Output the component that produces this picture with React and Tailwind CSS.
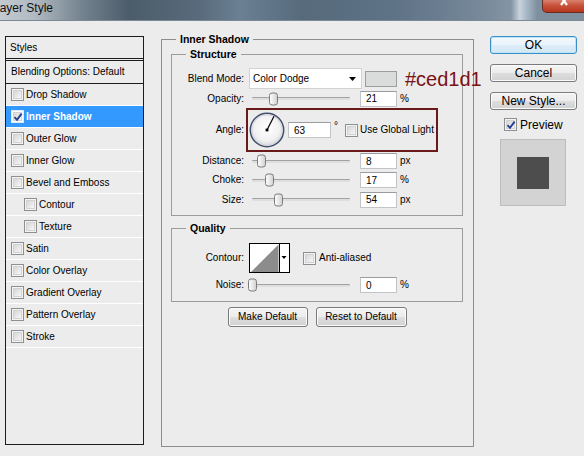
import React from "react";

/* ── Small pieces ── */
const CheckBox = ({ checked, light }) => (
  <span
    className={
      "relative inline-flex w-[13px] h-[13px] shrink-0 items-center justify-center border " +
      (light ? "border-[#dfe8f5] bg-white" : "border-[#8e8f8f] bg-[#f4f4f4]")
    }
  >
    <span className="w-[9px] h-[9px] border border-[#d2d2d2] bg-[linear-gradient(135deg,#d6d6d6_0%,#f7f7f7_100%)]" />
    {checked && (
      <svg className="absolute left-[1px] top-[1px]" width="10" height="10" viewBox="0 0 10 10">
        <path d="M1.5 5.2 L4 7.8 L8.6 1.6" fill="none" stroke="#23408e" strokeWidth="1.9" />
      </svg>
    )}
  </span>
);

const Btn = ({ children, primary, className = "" }) => (
  <div
    className={
      "flex items-center justify-center rounded-[3px] border leading-none " +
      (primary
        ? "border-[#3c8fc4] shadow-[inset_0_0_0_1px_#b9e4fb] bg-[linear-gradient(180deg,#f3f9fd_0%,#eaf4fa_50%,#dcedf7_51%,#d2e7f4_100%)] "
        : "border-[#7a7a7a] shadow-[inset_0_0_0_1px_#fbfbfb] bg-[linear-gradient(180deg,#f4f4f4_0%,#ececec_50%,#dedede_51%,#d2d2d2_100%)] ") +
      className
    }
  >
    {children}
  </div>
);

const Field = ({ value, w = "w-[37px]" }) => (
  <div className={"h-[16px] border border-[#c2c4c8] border-t-[#999b9f] bg-white pl-[5px] flex items-center text-[10px] " + w}>
    {value}
  </div>
);

const Slider = ({ thumb }) => (
  <div className="relative w-[104px] h-full flex items-center shrink-0">
    <div className="ml-[3px] w-[98px] h-[3px] rounded-[1px] border-t border-[#a2a2a2] bg-[#dedede]" />
    <div
      className="absolute top-1/2 -translate-y-1/2 w-[9px] h-[13px] rounded-[3px] border border-[#7c7c7c] bg-[linear-gradient(90deg,#fbfbfb_0%,#e9e9e9_50%,#d2d2d2_100%)]"
      style={{ left: thumb }}
    />
  </div>
);

const Label = ({ children }) => (
  <div className="w-[72px] shrink-0 text-right text-[10px] leading-none">{children}</div>
);

const SliderRow = ({ label, thumb, value, unit, h }) => (
  <div className={"flex items-center " + h}>
    <Label>{label}</Label>
    <div className="ml-[5px] flex items-center h-full">
      <Slider thumb={thumb} />
      <div className="ml-[7px]">
        <Field value={value} />
      </div>
      <span className="ml-[3px] text-[10px] leading-none">{unit}</span>
    </div>
  </div>
);

const Dial = () => (
  <svg width="36" height="36" viewBox="0 0 36 36" className="shrink-0">
    <defs>
      <radialGradient id="dialFill" cx="50%" cy="45%" r="55%">
        <stop offset="0%" stopColor="#ffffff" />
        <stop offset="70%" stopColor="#f1f1f1" />
        <stop offset="100%" stopColor="#cfd3db" />
      </radialGradient>
    </defs>
    <circle cx="18" cy="18" r="16.7" fill="url(#dialFill)" stroke="#44506b" strokeWidth="1.5" />
    <circle cx="18" cy="18" r="15.2" fill="none" stroke="#d3d7df" strokeWidth="1" />
    <line x1="18" y1="18" x2="25" y2="4.2" stroke="#000" strokeWidth="1.2" />
    <rect x="16.6" y="16.6" width="2.8" height="2.8" fill="#000" />
  </svg>
);

const ContourPicker = () => (
  <svg width="41" height="30" viewBox="0 0 41 30" className="shrink-0">
    <rect x="0.5" y="0.5" width="40" height="29" fill="#fff" stroke="#000" />
    <polygon points="2,29 29.5,1.5 29.5,29" fill="#8c8c8c" />
    <line x1="30.5" y1="0.5" x2="30.5" y2="29.5" stroke="#000" />
    <polygon points="32.5,13 37.5,13 35,16" fill="#000" />
  </svg>
);

const styleRows = [
  { name: "Drop Shadow" },
  { name: "Inner Shadow", on: true },
  { name: "Outer Glow" },
  { name: "Inner Glow" },
  { name: "Bevel and Emboss" },
  { name: "Contour", sub: true },
  { name: "Texture", sub: true },
  { name: "Satin" },
  { name: "Color Overlay" },
  { name: "Gradient Overlay" },
  { name: "Pattern Overlay" },
  { name: "Stroke" },
];

/* ── Main Component ── */
export default function App() {
  return (
    <div className="w-[584px] h-[456px] overflow-hidden bg-[#ececec] text-black font-['Liberation_Sans',Arial,sans-serif] flex flex-col">
      {/* title bar */}
      <div className="h-[21px] shrink-0 flex items-start border-b border-[#7d8a96] bg-[linear-gradient(90deg,#c3cad0_0%,#b0b9c1_6%,#74838f_14%,#4c5c6a_22%,#586a7b_34%,#6a8093_41%,#566a7c_52%,#5f7387_68%,#76889a_82%,#8494a3_87.5%,#c8d3dd_89%,#9fb0bf_90.5%,#7e8f9f_92%)]">
        <span className="ml-[-7px] mt-[1px] text-[12px] leading-[14px] text-[#111] whitespace-nowrap">Layer Style</span>
        <div className="ml-auto mr-[-3px] w-[45px] h-[13px] rounded-bl-[5px] border border-t-0 border-[#6b2a1e] bg-[linear-gradient(180deg,#d9826f_0%,#c9523b_45%,#b8361f_100%)] flex justify-center">
          <svg width="12" height="6" viewBox="0 0 12 6">
            <path d="M2 -3 L8 5 M8 -3 L2 5" stroke="#fff" strokeWidth="2.2" />
          </svg>
        </div>
      </div>

      <div className="flex items-start">
        {/* styles list */}
        <div className="ml-[5px] mt-[15px] w-[139px] h-[409px] shrink-0 border border-[#1c1c1c] text-[10px] leading-none flex flex-col">
          <div className="h-[24px] shrink-0 pl-[4px] flex items-center border-b-[3px] border-double border-[#1c1c1c]">Styles</div>
          <div className="h-[23px] shrink-0 pl-[5px] flex items-center border-b border-[#1c1c1c]">Blending Options: Default</div>
          {styleRows.map((r) => (
            <div
              key={r.name}
              className={
                "h-[22px] shrink-0 flex items-center border-b border-white " +
                (r.sub ? "pl-[18px] " : "pl-[5px] ") +
                (r.on ? "bg-[#3399ff] text-white font-bold" : "")
              }
            >
              <CheckBox checked={r.on} light={r.on} />
              <span className="ml-[2px]">{r.name}</span>
            </div>
          ))}
        </div>

        {/* main panel */}
        <fieldset className="ml-[17px] mt-[12px] w-[313px] min-w-0 h-[414px] shrink-0 border border-[#8d8d8d]">
          <legend className="ml-[14px] px-[4px] text-[10.5px] leading-[13px] font-bold">Inner Shadow</legend>
          <div className="pl-[9px] pr-[10px] flex flex-col">
            <fieldset className="mt-[2px] w-[292px] min-w-0 border border-[#9c9c9c]">
              <legend className="ml-[14px] px-[4px] text-[10.5px] leading-[13px] font-bold">Structure</legend>
              <div className="pt-[7px] pb-[6px] flex flex-col">
                <div className="h-[21px] w-[290px] flex items-center">
                  <Label>Blend Mode:</Label>
                  <div className="ml-[5px] w-[113px] h-[21px] shrink-0 border border-[#d2d2d2] bg-white flex items-center pl-[3px] text-[10px]">
                    Color Dodge
                    <svg className="ml-auto mr-[5px]" width="7" height="4" viewBox="0 0 7 4">
                      <polygon points="0,0 7,0 3.5,4" fill="#000" />
                    </svg>
                  </div>
                  <div className="ml-[3px] w-[32px] h-[16px] shrink-0 border border-[#9d9d9d] bg-[#dadcdc]" />
                  <span className="ml-[8px] w-0 overflow-visible whitespace-nowrap text-[20px] leading-none text-[#7a1214]">#ced1d1</span>
                </div>
                <SliderRow label="Opacity:" thumb={20} value="21" unit="%" h="h-[19px]" />
                <div className="h-[44px] flex items-center">
                  <Label>Angle:</Label>
                  <div className="ml-[2px] w-[192px] h-[44px] shrink-0 border-2 border-[#6b1a1a] flex items-center pl-[1px]">
                    <Dial />
                    <div className="ml-[3px]">
                      <Field value="63" w="w-[43px]" />
                    </div>
                    <span className="ml-[3px] self-start mt-[11px] text-[10px] leading-none">°</span>
                    <span className="ml-[7px] flex items-center whitespace-nowrap">
                      <CheckBox />
                      <span className="ml-[2px] text-[10px] leading-none">Use Global Light</span>
                    </span>
                  </div>
                </div>
                <SliderRow label="Distance:" thumb={8} value="8" unit="px" h="h-[18px]" />
                <SliderRow label="Choke:" thumb={16} value="17" unit="%" h="h-[20px]" />
                <SliderRow label="Size:" thumb={25} value="54" unit="px" h="h-[19px]" />
              </div>
            </fieldset>

            <fieldset className="mt-[6px] w-[292px] min-w-0 border border-[#9c9c9c]">
              <legend className="ml-[14px] px-[4px] text-[10.5px] leading-[13px] font-bold">Quality</legend>
              <div className="pt-[8px] pb-[6px] flex flex-col">
                <div className="h-[30px] flex items-center">
                  <Label>Contour:</Label>
                  <div className="ml-[5px] flex">
                    <ContourPicker />
                  </div>
                  <span className="ml-[13px] flex items-center">
                    <CheckBox />
                    <span className="ml-[3px] text-[10px] leading-none">Anti-aliased</span>
                  </span>
                </div>
                <div className="mt-[2px]">
                  <SliderRow label="Noise:" thumb={-1} value="0" unit="%" h="h-[20px]" />
                </div>
              </div>
            </fieldset>

            <div className="mt-[5px] flex justify-center gap-[8px] text-[10px]">
              <Btn className="w-[80px] h-[20px]">Make Default</Btn>
              <Btn className="w-[91px] h-[20px]">Reset to Default</Btn>
            </div>
          </div>
        </fieldset>

        {/* right column */}
        <div className="ml-[16px] mt-[15px] w-[87px] shrink-0 flex flex-col text-[12px]">
          <Btn primary className="h-[18px]">OK</Btn>
          <Btn className="mt-[10px] h-[18px]">Cancel</Btn>
          <Btn className="mt-[10px] h-[18px]">New Style...</Btn>
          <div className="mt-[8px] pl-[14px] flex items-center h-[13px]">
            <CheckBox checked />
            <span className="ml-[3px] leading-none">Preview</span>
          </div>
          <div className="mt-[8px] ml-[10px] w-[66px] h-[67px] border border-[#bdbdbd] bg-[#d3d3d3] flex items-center justify-center">
            <div className="w-[32px] h-[32px] bg-[#4d4d4d]" />
          </div>
        </div>
      </div>
    </div>
  );
}
